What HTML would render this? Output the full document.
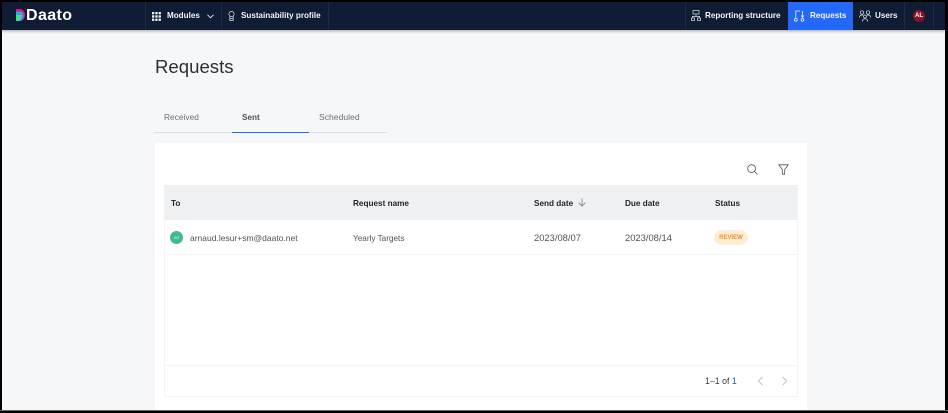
<!DOCTYPE html>
<html><head><meta charset="utf-8">
<style>
html,body{margin:0;padding:0;width:948px;height:413px;overflow:hidden;background:#000}
body{position:relative;font-family:"Liberation Sans",sans-serif}
.a{position:absolute;white-space:nowrap}
.nav{font-size:8.1px;font-weight:bold;color:#f2f4f8;line-height:12px}
.th{font-size:8.2px;font-weight:bold;color:#21272a;line-height:12px;top:198px}
.td{font-size:8.5px;color:#4d5358;line-height:12px;top:232px}
.sep{position:absolute;top:2px;width:1px;height:28px;background:#1d2a42}
svg{position:absolute;display:block}
</style></head><body>
<div class="a" style="left:2px;top:2px;width:943px;height:408px;background:#f6f7f9"></div>
<div class="a" style="left:0;top:410px;width:948px;height:1px;background:#666"></div>
<div class="a" style="left:2px;top:2px;width:943px;height:28px;background:#0f1c33;box-shadow:0 1px 3px rgba(0,0,0,.35)"></div>

<svg style="left:16px;top:9px" width="9" height="12" viewBox="0 0 9 12"><path d="M0 0h3.500C7 0 9 2.600 9 6s-2 6-5.500 6H0z" fill="#e0148c"/><path d="M0 2.500h3.500C6 2.500 7.500 4 7.500 6.500S6 12 3.500 12H0z" fill="#2ea7e8"/><path d="M0 6h5.500C5.500 9.500 4 12 2 12H0z" fill="#3de08a"/></svg>
<div class="a" style="left:26px;top:7px;font-size:16px;font-weight:bold;color:#fff;line-height:18px;letter-spacing:.4px">Daato</div>

<div class="sep" style="left:145px"></div><div class="sep" style="left:221px"></div><div class="sep" style="left:328px"></div>
<div class="sep" style="left:685px"></div><div class="sep" style="left:904px"></div><div class="sep" style="left:933px"></div>

<svg style="left:152px;top:12px" width="9" height="9" viewBox="0 0 9 9" fill="#f2f4f8"><rect width="2.300" height="2.300"/><rect x="3.300" width="2.300" height="2.300"/><rect x="6.600" width="2.300" height="2.300"/><rect y="3.300" width="2.300" height="2.300"/><rect x="3.300" y="3.300" width="2.300" height="2.300"/><rect x="6.600" y="3.300" width="2.300" height="2.300"/><rect y="6.600" width="2.300" height="2.300"/><rect x="3.300" y="6.600" width="2.300" height="2.300"/><rect x="6.600" y="6.600" width="2.300" height="2.300"/></svg>
<div class="a nav" style="left:167px;top:10px">Modules</div>
<svg style="left:207px;top:14px" width="7" height="5" viewBox="0 0 7 5" fill="none" stroke="#f2f4f8" stroke-width=".9"><path d="M.5 .8L3.500 3.800L6.500 .8"/></svg>

<svg style="left:228px;top:11px" width="7" height="10" viewBox="0 0 7 10" fill="none" stroke="#e2e5ea" stroke-width=".7"><circle cx="3.500" cy="3" r="2.600"/><path d="M1.800 5.500V9.500H5.200V5.500M1.800 7.500H5.200"/></svg>
<div class="a nav" style="left:241px;top:10px">Sustainability profile</div>

<svg style="left:691px;top:10px" width="10" height="11" viewBox="0 0 10 11" fill="none" stroke="#e2e5ea" stroke-width=".7"><rect x="2" y=".5" width="6" height="3.500"/><path d="M5 4V6M1 6.500H9M1.500 6.500V8M8.500 6.500V8"/><rect x=".5" y="8" width="3" height="2.500"/><rect x="6.500" y="8" width="3" height="2.500"/></svg>
<div class="a nav" style="left:705px;top:10px">Reporting structure</div>

<div class="a" style="left:788px;top:2px;width:65px;height:28px;background:#2468f7"></div>
<svg style="left:794px;top:10px" width="11" height="12" viewBox="0 0 11 12" fill="none" stroke="#f2f4f8" stroke-width=".8"><path d="M6 1H1.800V8M8.500 1V8M7 5.500L8.500 7L10 5.500"/><circle cx="1.800" cy="9.800" r="1.400"/><circle cx="8.500" cy="9.800" r="1.400"/></svg>
<div class="a nav" style="left:810px;top:10px">Requests</div>

<svg style="left:859px;top:10px" width="12" height="12" viewBox="0 0 12 12" fill="none" stroke="#e2e5ea" stroke-width=".7"><circle cx="3" cy="2.500" r="1.700"/><circle cx="9" cy="2.500" r="1.700"/><circle cx="6" cy="6.500" r="1.500"/><path d="M.5 7.500C.5 5.800 1.500 5 3 5H4M11.500 7.500C11.500 5.800 10.500 5 9 5H8M3.500 11.500C3.500 9.500 4.500 8.800 6 8.800S8.500 9.500 8.500 11.500"/></svg>
<div class="a nav" style="left:875px;top:10px">Users</div>

<div class="a" style="left:913px;top:10px;width:12px;height:12px;border-radius:50%;background:#8a1027;color:#fff;font-size:6px;font-weight:bold;line-height:12px;text-align:center">AL</div>

<div class="a" style="left:155px;top:55px;font-size:18.6px;color:#2b3033;line-height:24px">Requests</div>

<div class="a" style="left:164px;top:111px;font-size:8.4px;color:#697077;line-height:12px">Received</div>
<div class="a" style="left:242px;top:112px;font-size:8.2px;font-weight:bold;color:#4d5358;line-height:12px">Sent</div>
<div class="a" style="left:319px;top:111px;font-size:8.6px;color:#697077;line-height:12px">Scheduled</div>
<div class="a" style="left:154px;top:132px;width:233px;height:1px;background:#dde1e6"></div>
<div class="a" style="left:232px;top:132px;width:77px;height:1px;background:#2468f7"></div>

<div class="a" style="left:155px;top:143px;width:652px;height:267px;background:#fff"></div>

<svg style="left:747px;top:164px" width="11" height="11" viewBox="0 0 11 11" fill="none" stroke="#4d5358" stroke-width=".8"><circle cx="4.600" cy="4.600" r="3.900"/><path d="M7.400 7.400L10.500 10.500"/></svg>
<svg style="left:778px;top:164px" width="11" height="11" viewBox="0 0 11 11" fill="none" stroke="#4d5358" stroke-width=".8"><path d="M.8 .8H10.200L6.700 5.500V10.200H4.300V5.500Z"/></svg>

<div class="a" style="left:164px;top:185px;width:634px;height:35px;background:#eff0f2"></div>
<div class="a th" style="left:171px">To</div>
<div class="a th" style="left:353px">Request name</div>
<div class="a th" style="left:534px">Send date</div>
<svg style="left:578px;top:198px" width="8" height="9" viewBox="0 0 8 9" fill="none" stroke="#7a8087" stroke-width=".8"><path d="M4 .5V8M.8 4.800L4 8L7.200 4.800"/></svg>
<div class="a th" style="left:625px">Due date</div>
<div class="a th" style="left:715px">Status</div>

<div class="a" style="left:170px;top:231px;width:13px;height:13px;border-radius:50%;background:#42b991;color:#d5f0e6;font-size:4px;line-height:13px;text-align:center">AR</div>
<div class="a td" style="left:190px">arnaud.lesur+sm@daato.net</div>
<div class="a td" style="left:353px;top:233px;font-size:8.2px">Yearly Targets</div>
<div class="a td" style="left:534px;font-size:9.4px">2023/08/07</div>
<div class="a td" style="left:625px;font-size:9.4px">2023/08/14</div>
<div class="a" style="left:714px;top:230px;width:34px;height:15px;border-radius:8px;background:#fdeed3;color:#e8912a;font-size:6px;font-weight:bold;line-height:17px;text-align:center">REVIEW</div>

<div class="a" style="left:164px;top:254px;width:634px;height:1px;background:#f2f4f8"></div>
<div class="a" style="left:164px;top:220px;width:1px;height:177px;background:#f2f4f8"></div>
<div class="a" style="left:797px;top:220px;width:1px;height:177px;background:#f2f4f8"></div>
<div class="a" style="left:164px;top:365px;width:634px;height:1px;background:#f2f4f8"></div>
<div class="a" style="left:164px;top:396px;width:634px;height:1px;background:#f2f4f8"></div>

<div class="a" style="left:705px;top:375px;font-size:8.8px;color:#343a3f;line-height:12px">1–1 of <span style="color:#1d5f8a">1</span></div>
<svg style="left:757px;top:376px" width="7" height="10" viewBox="0 0 7 10" fill="none" stroke="#b5bbc1" stroke-width=".9"><path d="M5.500 .8L1.500 5L5.500 9.200"/></svg>
<svg style="left:781px;top:376px" width="7" height="10" viewBox="0 0 7 10" fill="none" stroke="#b5bbc1" stroke-width=".9"><path d="M1.500 .8L5.500 5L1.500 9.200"/></svg>
</body></html>
